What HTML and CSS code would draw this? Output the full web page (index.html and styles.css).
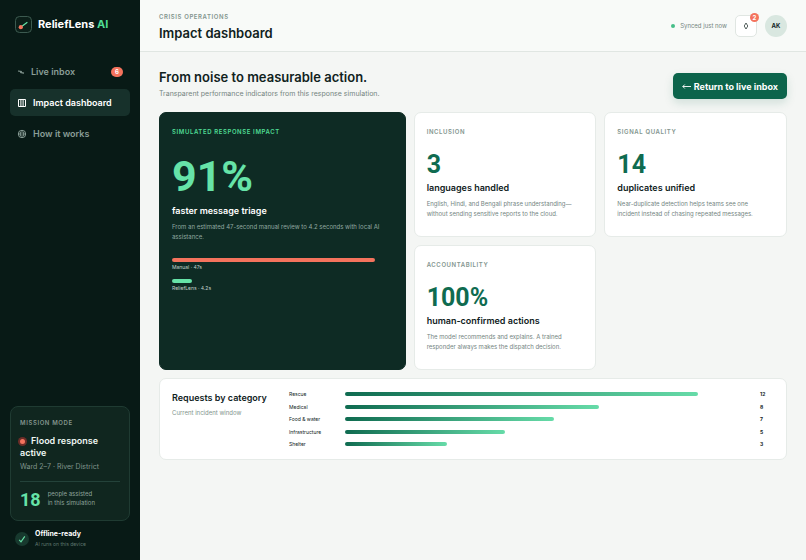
FILE: index.html
```html
<!DOCTYPE html>
<html lang="en">
<head>
    <meta charset="UTF-8">
    <meta name="viewport" content="width=device-width, initial-scale=1.0">
    <title>ReliefLens AI</title>
    <link rel="stylesheet" href="styles.css">
</head>
<body>

    <aside class="sidebar">
        <a class="brand" href="#">
            <svg class="brand-mark" viewBox="0 0 17 17" aria-hidden="true">
                <rect x="0.5" y="0.5" width="16" height="16" rx="4" fill="#0b1f19" stroke="#3c5a50"/>
                <path d="M6 11L12 6.5" stroke="#66e3a8" stroke-width="1.2" stroke-linecap="round"/>
                <circle cx="5.8" cy="11.2" r="2.1" fill="#f4735d"/>
            </svg>
            <span>ReliefLens <em>AI</em></span>
        </a>

        <nav class="nav">
            <a class="nav-link nav-inbox" href="#inbox">
                <svg viewBox="0 0 8 10" width="8" height="10" aria-hidden="true">
                    <path d="M1 4L4.2 4.4L3.8 5.6L7 6.2" fill="none" stroke="currentColor" stroke-width="1.2"/>
                </svg>
                Live inbox
                <span class="count">6</span>
            </a>
            <a class="nav-link active" href="#impact">
                <svg viewBox="0 0 10 10" width="10" height="10" aria-hidden="true">
                    <path d="M1.5 1.5H8.5V8.5H1.5ZM3.9 1.5V8.5M6.1 1.5V8.5" fill="none" stroke="currentColor" stroke-width="1"/>
                </svg>
                Impact dashboard
            </a>
            <a class="nav-link" href="#how">
                <svg viewBox="0 0 10 10" width="10" height="10" aria-hidden="true">
                    <circle cx="5" cy="5" r="3.7" fill="none" stroke="currentColor"/>
                    <rect x="3.3" y="3" width="3.4" height="4" rx="1" fill="none" stroke="currentColor"/>
                    <path d="M1.2 5H8.8" stroke="currentColor" stroke-width="0.8"/>
                </svg>
                How it works
            </a>
        </nav>

        <section class="mission">
            <p class="label">Mission mode</p>
            <h2><span class="pulse"></span>Flood response active</h2>
            <p class="ward">Ward 2–7 · River District</p>
            <div class="assisted">
                <strong>18</strong>
                <span>people assisted<br>in this simulation</span>
            </div>
        </section>

        <div class="offline">
            <svg viewBox="0 0 14 14" width="14" height="14" aria-hidden="true">
                <circle cx="7" cy="7" r="7" fill="#17392e"/>
                <path d="M4.2 7.8L6 9.8L9.8 4.4" fill="none" stroke="#66e3a8" stroke-width="1.1"/>
            </svg>
            <div>
                <strong>Offline-ready</strong>
                <span>AI runs on this device</span>
            </div>
        </div>
    </aside>

    <main class="main">
        <header class="topbar">
            <div class="page-title">
                <p class="label">Crisis operations</p>
                <h1>Impact dashboard</h1>
            </div>
            <div class="top-actions">
                <span class="sync">Synced just now</span>
                <button class="bell" type="button" aria-label="Notifications">
                    <svg viewBox="0 0 6 8" width="6" height="8" aria-hidden="true">
                        <path d="M3 1L4.8 4L3 7L1.2 4Z" fill="none" stroke="currentColor" stroke-width="0.7"/>
                    </svg>
                    <span class="bell-count">2</span>
                </button>
                <span class="avatar">AK</span>
            </div>
        </header>

        <div class="content">
            <div class="intro">
                <div>
                    <h2>From noise to measurable action.</h2>
                    <p>Transparent performance indicators from this response simulation.</p>
                </div>
                <button class="return-btn" type="button">
                    <svg viewBox="0 0 9 8" width="9" height="8" aria-hidden="true">
                        <path d="M9 4.5H0.8M2.8 2.5L0.8 4.5L2.8 6.5" fill="none" stroke="currentColor" stroke-width="0.9"/>
                    </svg>
                    Return to live inbox
                </button>
            </div>

            <div class="metrics">
                <article class="card hero">
                    <p class="label">Simulated response impact</p>
                    <strong class="number">91%</strong>
                    <h3>faster message triage</h3>
                    <p class="text">From an estimated 47-second manual review to 4.2 seconds with local AI assistance.</p>
                    <div class="compare">
                        <i class="manual" style="width: 92%"></i>
                        <small>Manual · 47s</small>
                        <i style="width: 9%"></i>
                        <small>ReliefLens · 4.2s</small>
                    </div>
                </article>
                <article class="card">
                    <p class="label">Inclusion</p>
                    <strong class="number">3</strong>
                    <h3>languages handled</h3>
                    <p class="text">English, Hindi, and Bengali phrase understanding—without sending sensitive reports to the cloud.</p>
                </article>
                <article class="card">
                    <p class="label">Signal quality</p>
                    <strong class="number">14</strong>
                    <h3>duplicates unified</h3>
                    <p class="text">Near-duplicate detection helps teams see one incident instead of chasing repeated messages.</p>
                </article>
                <article class="card">
                    <p class="label">Accountability</p>
                    <strong class="number">100%</strong>
                    <h3>human-confirmed actions</h3>
                    <p class="text">The model recommends and explains. A trained responder always makes the dispatch decision.</p>
                </article>
            </div>

            <section class="card categories">
                <div>
                    <h2>Requests by category</h2>
                    <p>Current incident window</p>
                </div>
                <div class="chart">
                    <div class="row"><span>Rescue</span><div><i style="width: 87%"></i></div><b>12</b></div>
                    <div class="row"><span>Medical</span><div><i style="width: 62.5%"></i></div><b>8</b></div>
                    <div class="row"><span>Food &amp; water</span><div><i style="width: 51.5%"></i></div><b>7</b></div>
                    <div class="row"><span>Infrastructure</span><div><i style="width: 39.5%"></i></div><b>5</b></div>
                    <div class="row"><span>Shelter</span><div><i style="width: 25%"></i></div><b>3</b></div>
                </div>
            </section>
        </div>
    </main>

</body>
</html>
```
FILE: styles.css
```css
* {
    box-sizing: border-box;
}

body {
    font-family: Inter, 'Noto Sans', sans-serif;
    font-size: 7px;
    line-height: 10px;
    background-color: #f4f6f4;
    color: #10221d;
    margin: 0;
    display: flex;
    min-height: 100vh;
}

h1, h2, h3, p {
    margin: 0;
}

button {
    font-family: inherit;
    cursor: pointer;
}

.label {
    font-size: 6px;
    line-height: 8px;
    font-weight: 600;
    letter-spacing: 0.1em;
    text-transform: uppercase;
    color: #83958e;
}

.sidebar {
    width: 140px;
    flex-shrink: 0;
    padding: 16px 10px 11px;
    background-color: #081a16;
    display: flex;
    flex-direction: column;
}

.brand {
    display: flex;
    align-items: center;
    gap: 6px;
    padding-left: 5px;
    color: white;
    font-size: 11px;
    line-height: 17px;
    font-weight: 700;
    text-decoration: none;
}

.brand em {
    font-style: normal;
    color: #4fdc94;
}

.brand-mark {
    width: 17px;
    height: 17px;
}

.nav {
    display: flex;
    flex-direction: column;
    gap: 4px;
    margin-top: 25px;
}

.nav-link {
    display: flex;
    align-items: center;
    gap: 6px;
    height: 27px;
    padding: 0 7px;
    border-radius: 5px;
    color: #8a9e97;
    font-size: 9px;
    font-weight: 600;
    text-decoration: none;
}

.nav-link.active {
    background-color: #17312b;
    color: white;
}

.count {
    margin-left: auto;
    padding: 0 4px;
    border-radius: 5px;
    background-color: #f4735d;
    color: white;
    font-size: 6px;
    line-height: 10px;
    font-weight: 700;
}

.mission {
    margin-top: auto;
    padding: 12px 9px 9px;
    border: 1px solid #1f3b32;
    border-radius: 8px;
    background-color: #10261f;
}

.mission h2 {
    margin-top: 8px;
    color: #eef6f2;
    font-size: 9px;
    line-height: 12px;
    font-weight: 600;
}

.pulse {
    display: inline-block;
    width: 5px;
    height: 5px;
    margin-right: 6px;
    border-radius: 50%;
    background-color: #f4735d;
    box-shadow: 0 0 0 2px #6b2d28;
}

.ward {
    margin-top: 3px;
    color: #80958d;
}

.assisted {
    display: flex;
    gap: 7px;
    margin-top: 9px;
    padding-top: 7px;
    border-top: 1px solid #24423a;
    color: #8fa39b;
    font-size: 6px;
    line-height: 9px;
}

.assisted strong {
    color: #66e3a8;
    font-family: Roboto, Inter, sans-serif;
    font-size: 18px;
    line-height: 22px;
}

.offline {
    display: flex;
    align-items: center;
    gap: 6px;
    margin-top: 8px;
    padding-left: 5px;
}

.offline strong,
.offline span {
    display: block;
}

.offline strong {
    color: white;
}

.offline span {
    color: #5f776e;
    font-size: 5px;
}

.main {
    flex: 1;
    min-width: 0;
}

.topbar {
    display: flex;
    justify-content: space-between;
    align-items: center;
    height: 52px;
    padding: 0 19px;
    border-bottom: 1px solid #e0e6e2;
    background-color: #f8faf8;
}

.page-title {
    padding-top: 3px;
}

.topbar h1 {
    margin-top: 3px;
    font-size: 13px;
    line-height: 18px;
    font-weight: 600;
}

.top-actions {
    display: flex;
    align-items: center;
    gap: 8px;
}

.sync {
    display: flex;
    align-items: center;
    gap: 5px;
    color: #74857f;
    font-size: 6px;
}

.sync::before {
    content: "";
    width: 4px;
    height: 4px;
    border-radius: 50%;
    background-color: #46bd88;
}

.bell {
    position: relative;
    display: flex;
    align-items: center;
    justify-content: center;
    width: 22px;
    height: 22px;
    padding: 0;
    border: 1px solid #e0e6e2;
    border-radius: 5px;
    background-color: white;
    color: #10221d;
}

.bell-count {
    position: absolute;
    top: -3px;
    right: -3px;
    width: 9px;
    border-radius: 50%;
    background-color: #f4735d;
    color: white;
    font-size: 6px;
    line-height: 9px;
    font-weight: 700;
}

.avatar {
    width: 22px;
    border-radius: 50%;
    background-color: #d9e7e0;
    font-size: 6px;
    line-height: 22px;
    font-weight: 700;
    text-align: center;
}

.content {
    padding: 16px 19px;
}

.intro {
    display: flex;
    justify-content: space-between;
    align-items: flex-end;
    margin-bottom: 13px;
}

.intro h2 {
    font-size: 13px;
    line-height: 18px;
    font-weight: 600;
}

.intro p {
    margin: 3px 0 0;
    color: #74857f;
}

.return-btn {
    display: flex;
    align-items: center;
    gap: 3px;
    height: 26px;
    padding: 0 9px;
    border: none;
    border-radius: 5px;
    background-color: #0c644b;
    box-shadow: 0 4px 10px rgba(12, 100, 75, 0.15);
    color: white;
    font-size: 9px;
    font-weight: 700;
}

.metrics {
    display: grid;
    grid-template-columns: 1.35fr 1fr 1fr;
    gap: 8px;
}

.card {
    padding: 15px 12px 17px;
    border: 1px solid #e6ebe8;
    border-radius: 7px;
    background-color: white;
}

.number {
    display: block;
    margin-top: 14px;
    color: #0f6b50;
    font-family: Roboto, Inter, sans-serif;
    font-size: 25px;
    line-height: 30px;
    font-weight: 700;
}

.card h3 {
    margin-top: 2px;
    font-size: 9px;
    line-height: 12px;
    font-weight: 600;
}

.card .text {
    margin-top: 5px;
    padding-right: 8px;
    color: #74857f;
    font-size: 6px;
    line-height: 10px;
}

.hero {
    grid-row: span 2;
    background-color: #0e2b24;
    border-color: #0e2b24;
    color: white;
}

.hero .label {
    color: #4fdc94;
}

.hero .number {
    color: #66e3a8;
    font-size: 43px;
    line-height: 53px;
}

.hero .text {
    color: #91a8a0;
}

.compare {
    margin-top: 16px;
}

.compare i {
    display: block;
    height: 4px;
    border-radius: 2px;
    background-color: #66e3a8;
}

.compare .manual {
    background-color: #f4735d;
}

.compare small {
    display: block;
    margin: 1px 0 7px;
    color: #c3d2cc;
    font-size: 5px;
    line-height: 9px;
}

.categories {
    display: grid;
    grid-template-columns: 100px 1fr;
    gap: 17px;
    margin-top: 8px;
    padding: 10px 12px;
}

.categories h2 {
    font-size: 9px;
    line-height: 18px;
    font-weight: 600;
}

.categories p {
    margin-top: 1px;
    color: #83958e;
    font-size: 6px;
}

.chart {
    display: flex;
    flex-direction: column;
    justify-content: space-between;
    min-height: 60px;
}

.row {
    display: grid;
    grid-template-columns: 47px 1fr 14px;
    gap: 9px;
    align-items: center;
    font-size: 5px;
}

.row i {
    display: block;
    height: 4px;
    border-radius: 2px;
    background: linear-gradient(90deg, #0f6b50, #66dba8);
}
```
